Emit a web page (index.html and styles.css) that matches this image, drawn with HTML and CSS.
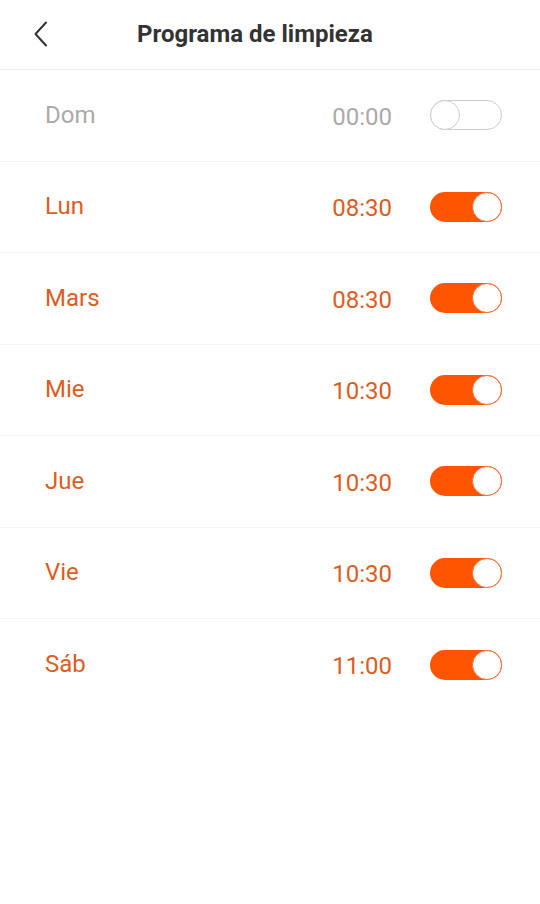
FILE: index.html
```html
<!DOCTYPE html>
<html lang="es">
<head>
<meta charset="utf-8">
<title>Programa de limpieza</title>
<link rel="stylesheet" href="styles.css">
</head>
<body>
<div class="app">
  <header class="topbar">
    <button class="back" aria-label="Atrás">
      <svg width="16" height="26" viewBox="0 0 16 26"><path d="M13 1.5 L2.5 13 L13 24.5" fill="none" stroke="#333" stroke-width="2" stroke-linecap="round" stroke-linejoin="round"/></svg>
    </button>
    <h1 class="title">Programa de limpieza</h1>
  </header>
  <ul class="list">
    <li class="row off"><span class="day">Dom</span><span class="time">00:00</span><span class="toggle"><span class="knob"></span></span></li>
    <li class="row on"><span class="day">Lun</span><span class="time">08:30</span><span class="toggle"><span class="knob"></span></span></li>
    <li class="row on"><span class="day">Mars</span><span class="time">08:30</span><span class="toggle"><span class="knob"></span></span></li>
    <li class="row on"><span class="day">Mie</span><span class="time">10:30</span><span class="toggle"><span class="knob"></span></span></li>
    <li class="row on"><span class="day">Jue</span><span class="time">10:30</span><span class="toggle"><span class="knob"></span></span></li>
    <li class="row on"><span class="day">Vie</span><span class="time">10:30</span><span class="toggle"><span class="knob"></span></span></li>
    <li class="row on last"><span class="day">Sáb</span><span class="time">11:00</span><span class="toggle"><span class="knob"></span></span></li>
  </ul>
</div>
</body>
</html>
```
FILE: styles.css
```css
* { box-sizing: border-box; }
html, body { margin: 0; padding: 0; background: #fff; }
body { font-family: Roboto, "Noto Sans", "Liberation Sans", sans-serif; }
.app { width: 540px; height: 904px; background: #fff; }
.topbar {
  height: 70px;
  display: flex;
  align-items: center;
  border-bottom: 1px solid #f0f0f0;
  padding-left: 33px;
}
.back {
  border: 0; background: none; padding: 0; width: 16px; height: 26px;
  display: flex; align-items: center; justify-content: center;
  margin-top: -2px;
}
.title {
  margin: -1px 0 0 88px;
  font-size: 24px;
  font-weight: 700;
  color: #333;
}
.list { list-style: none; margin: 0; padding: 0; }
.row {
  height: 91.5px;
  display: flex;
  align-items: center;
  padding: 0 38px 0 45px;
  border-bottom: 1px solid #f3f3f3;
}
.row.last { border-bottom: 0; }
.day { flex: 1; font-size: 24px; margin-top: -1px; }
.time { font-size: 24px; margin-right: 38px; margin-top: 3px; }
.on .day, .on .time { color: #dc5d1f; }
.off .day, .off .time { color: #aaa; }
.toggle {
  width: 72px; height: 30px; border-radius: 15px;
  display: flex; align-items: center;
  position: relative;
}
.on .toggle { background: #ff5500; justify-content: flex-end; }
.off .toggle { background: #fff; border: 1.5px solid #ccc; justify-content: flex-start; }
.knob {
  width: 30px; height: 30px; border-radius: 50%; background: #fff;
}
.on .knob { border: 1px solid #f07040; }
.off .knob { border: 1.5px solid #ccc; margin: -1.5px; }
```
